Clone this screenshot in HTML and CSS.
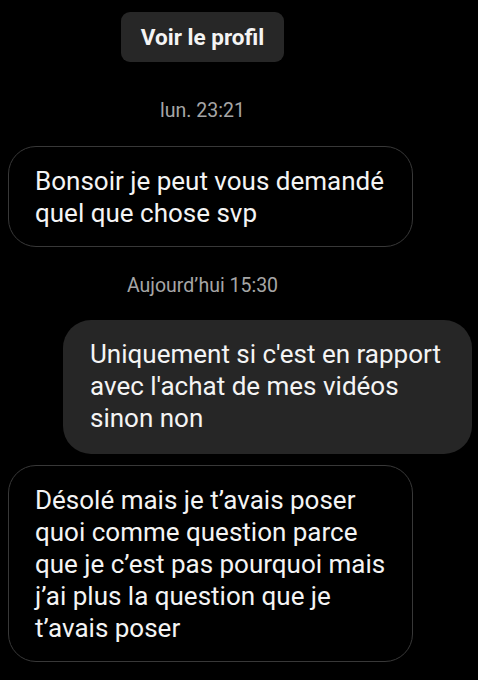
FILE: index.html
```html
<!DOCTYPE html>
<html lang="fr">
<head>
  <meta charset="UTF-8" />
  <meta name="viewport" content="width=device-width, initial-scale=1.0"/>
  <title>Messages</title>
  <link rel="stylesheet" href="styles.css">
</head>
<body>
  <div class="thread">
    <div class="center top">
      <button class="profile-btn">Voir le profil</button>
    </div>

    <div class="center stamp stamp-first">lun. 23:21</div>

    <div class="bubble received">Bonsoir je peut vous demandé quel que chose svp</div>

    <div class="center stamp stamp-second">Aujourd’hui 15:30</div>

    <div class="bubble sent">Uniquement si c'est en rapport avec l'achat de mes vidéos sinon non</div>

    <div class="bubble received last">Désolé mais je t’avais poser quoi comme question parce que je c’est pas pourquoi mais j’ai plus la question que je t’avais poser</div>
  </div>
</body>
</html>
```

FILE: styles.css
```css
body {
  margin: 0;
  background: #000;
  color: #f4f4f4;
  font-family: Roboto, "Liberation Sans", sans-serif;
}
.thread {
  display: flex;
  flex-direction: column;
  padding-top: 12px;
}
.center {
  width: 405px;
  display: flex;
  justify-content: center;
}
.profile-btn {
  height: 50px;
  padding: 0 20px;
  background: #272727;
  color: #f4f4f4;
  border: none;
  border-radius: 9px;
  font-family: inherit;
  font-size: 22.5px;
  font-weight: bold;
}
.stamp {
  font-size: 19.5px;
  line-height: 24px;
  color: #a6a6a6;
}
.stamp-first {
  margin-top: 37px;
  margin-bottom: 23px;
}
.stamp-second {
  margin-top: 27px;
  margin-bottom: 22px;
}
.bubble {
  box-sizing: border-box;
  font-size: 26px;
  line-height: 32px;
  border-radius: 28px;
}
.received {
  margin-left: 8px;
  width: 405px;
  padding: 18px 20px 17px 26px;
  border: 1px solid #383838;
}
.sent {
  margin-left: 63px;
  width: 409px;
  padding: 18px 20px 20px 27px;
  background: #262626;
}
.last {
  margin-top: 11px;
}
```
